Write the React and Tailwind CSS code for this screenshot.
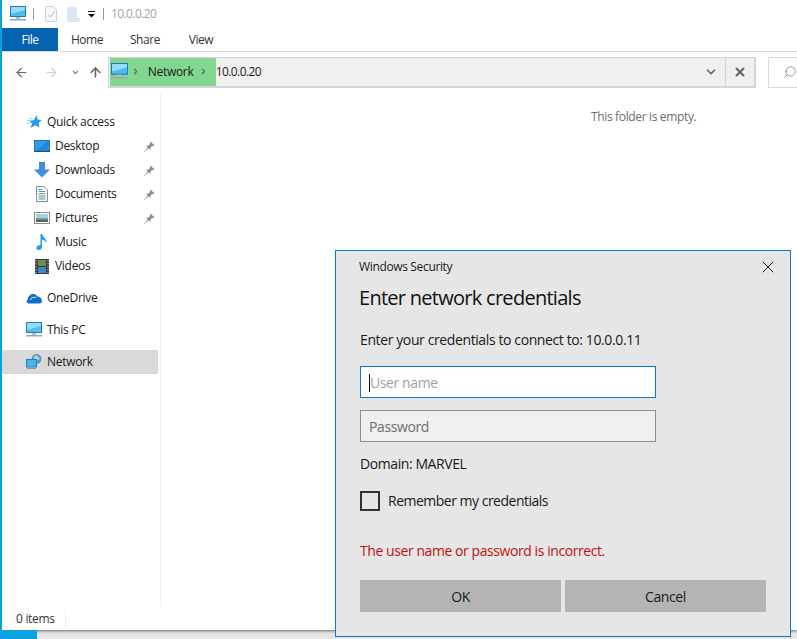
import { ArrowLeft, ArrowRight, ArrowUp, ChevronDown, ChevronRight, X, Search } from 'lucide-react'

const FONT = 'font-["Open_Sans","Noto_Sans",sans-serif]'

function MonitorIcon({ size = 16 }) {
  return (
    <svg width={size} height={size} viewBox="0 0 16 16">
      <rect x="0.5" y="0.5" width="15" height="10" fill="#4fbcf2" stroke="#2278b0" />
      <path d="M1 1 H15 V4 L1 8 Z" fill="#93dcfb" />
      <rect x="6" y="11" width="4" height="2" fill="#b5c0c7" />
      <rect x="0" y="13" width="16" height="1.5" fill="#9aa3c4" />
    </svg>
  )
}

function PinIcon() {
  return (
    <svg width="11" height="11" viewBox="0 0 11 11">
      <path d="M6.5 0.5 L10.5 4.5 L9.3 5 L7.8 4.9 L6.2 7.6 L6.3 9 L2 4.7 L3.4 4.8 L6.1 3.2 L6 1.7 Z" fill="#8c8c8c" />
      <path d="M3.8 7 L0.5 10.5 L4.2 7.4 Z" fill="#8c8c8c" stroke="#8c8c8c" strokeWidth="0.5" />
    </svg>
  )
}

function StarIcon() {
  return (
    <svg width="16" height="16" viewBox="0 0 16 16">
      <path d="M10.5 1 L11.6 5.4 L16 6 L12.6 8.8 L13.4 13.5 L9.4 11.2 L4.5 14 L6 9.6 L3.5 7.5 L8 6 Z" fill="#2a9be6" />
      <path d="M1 6.5 H6 M0 9 H4.5 M3 4.5 H7" stroke="#9ad4f7" strokeWidth="1" />
    </svg>
  )
}

function DesktopIcon() {
  return (
    <svg width="16" height="12" viewBox="0 0 16 12">
      <rect x="0.5" y="0.5" width="15" height="10.5" fill="#2c9cf0" stroke="#2a6ea8" />
      <path d="M3 10 L13 1.5 H14.5 V10 Z" fill="#1c86de" />
      <rect x="0" y="11" width="16" height="1" fill="#1c4f80" />
    </svg>
  )
}

function DownloadIcon() {
  return (
    <svg width="16" height="16" viewBox="0 0 16 16">
      <path d="M5 0 H11 V7.5 H16 L8 15.5 L0 7.5 H5 Z" fill="#3d8fdc" />
    </svg>
  )
}

function DocumentIcon() {
  return (
    <svg width="12" height="16" viewBox="0 0 12 16">
      <path d="M0.5 0.5 H8 L11.5 4 V15.5 H0.5 Z" fill="#fff" stroke="#8a8a8a" />
      <path d="M2.5 3.5 H6 M2.5 5.5 H9.5 M2.5 11 H9.5 M2.5 13 H9.5" stroke="#3f9ad9" />
      <path d="M2.5 7.5 H9.5 M2.5 9.2 H9.5" stroke="#8fa89a" />
    </svg>
  )
}

function PicturesIcon() {
  return (
    <svg width="16" height="12" viewBox="0 0 16 12">
      <rect x="0.5" y="0.5" width="15" height="11" fill="#fff" stroke="#8a8a8a" />
      <rect x="2" y="2" width="12" height="4" fill="#a8cde8" />
      <rect x="2" y="6" width="12" height="2" fill="#6f9a86" />
      <rect x="2" y="8" width="12" height="2" fill="#3f6b58" />
    </svg>
  )
}

function MusicIcon() {
  return (
    <svg width="12" height="16" viewBox="0 0 12 16">
      <path d="M4.5 0 H6 C6.5 3 11 4.5 10.5 9 C10 7 8 6 6 5.5 V13 C6 15 4 16 2.5 16 C1 16 0 15 0.5 13.5 C1 12 3 11 4.5 11.5 Z" fill="#1e9be8" />
    </svg>
  )
}

function VideosIcon() {
  return (
    <svg width="14" height="15" viewBox="0 0 14 15">
      <rect width="14" height="15" fill="#3a3a3a" />
      <rect x="3" y="1" width="8" height="6" fill="#6f8f4a" />
      <rect x="3" y="8" width="8" height="6" fill="#3d86c9" />
      <path d="M1 1 V14 M13 1 V14" stroke="#c9c9c9" strokeWidth="1" strokeDasharray="1.5 1.5" />
    </svg>
  )
}

function CloudIcon() {
  return (
    <svg width="16" height="11" viewBox="0 0 16 11">
      <path d="M3 10.5 C0.5 10.5 0 8 1.5 6.8 C2 3 5 1 7.5 1 C9.5 1 10.5 2 11.2 3.5 C13.5 3.5 15.5 5 16 7.5 C16 9.5 15 10.5 13.5 10.5 Z" fill="#0f6fc6" />
      <path d="M4.5 7 C5 4.5 8 3.5 10 5" stroke="#fff" strokeWidth="1" fill="none" />
    </svg>
  )
}

function NetworkIcon() {
  return (
    <svg width="16" height="16" viewBox="0 0 16 16">
      <circle cx="10.5" cy="5" r="5" fill="#5f93b8" />
      <path d="M7 3 L11 1 L14 5 L10 7 Z" fill="#a9cfe6" />
      <rect x="0.5" y="5.5" width="10" height="7.5" fill="#4db5ee" stroke="#2a7fb8" />
      <rect x="1" y="14" width="9" height="1" fill="#8b97a0" />
    </svg>
  )
}

function NavRow({ icon, label, pinned, active, top, indent }) {
  return (
    <div className={`flex items-center h-6 ${active ? 'bg-[#d9d9d9]' : ''} ${top ?? ''}`}>
      <div className={`flex items-center justify-center w-4 shrink-0 ${indent ? 'ml-8' : 'ml-6'}`}>{icon}</div>
      <span className="text-[12px] tracking-[-0.3px] text-[#1a1a1a] ml-[5px]">{label}</span>
      {pinned && (
        <span className="ml-auto mr-[3px] w-[11px] flex">
          <PinIcon />
        </span>
      )}
    </div>
  )
}

export default function App() {
  return (
    <div className={`${FONT} relative w-[797px] h-[639px] overflow-hidden bg-[#e6e6e6]`}>
      <div className="h-[630px] bg-white border-l-2 border-[#0a9fe0] flex flex-col shadow-[0_1px_3px_rgba(0,0,0,0.55)]">
        {/* title bar */}
        <div className="h-[28px] flex items-center shrink-0 pl-[8px]">
          <MonitorIcon />
          <span className="ml-[7px] w-px h-[12px] bg-[#9a9a9a]" />
          <svg className="ml-[11px]" width="12" height="16" viewBox="0 0 12 16">
            <path d="M0.5 0.5 H8 L11.5 4 V15.5 H0.5 Z" fill="#f4f7fb" stroke="#c3d2e6" />
            <path d="M3 8.5 L5.5 11 L9.5 5.5" stroke="#b0bcc9" fill="none" />
          </svg>
          <svg className="ml-[10px]" width="13" height="15" viewBox="0 0 13 15">
            <path d="M0 0 H10 V11 H13 V15 H0 Z" fill="#dce6f3" />
          </svg>
          <svg className="ml-[8px]" width="7" height="7" viewBox="0 0 7 7">
            <path d="M0 0.5 H7" stroke="#111" />
            <path d="M0 3 H7 L3.5 6.5 Z" fill="#111" />
          </svg>
          <span className="ml-[8px] w-px h-[12px] bg-[#9a9a9a]" />
          <span className="ml-[7px] text-[12px] tracking-[-0.6px] text-[#a6a6a6]">10.0.0.20</span>
        </div>

        {/* ribbon tabs */}
        <div className="h-[24px] flex items-stretch shrink-0 border-b border-[#dadada] text-[12px] tracking-[-0.45px] text-[#333]">
          <div className="w-[56px] pt-px bg-[#0563af] text-white flex items-center justify-center">File</div>
          <div className="w-[58px] pt-px flex items-center justify-center">Home</div>
          <div className="w-[58px] pt-px flex items-center justify-center">Share</div>
          <div className="w-[58px] pt-px flex items-center justify-center -ml-[2px]">View</div>
        </div>

        {/* address row */}
        <div className="h-[40px] flex items-center shrink-0">
          <ArrowLeft className="ml-[12px] text-[#666]" size={15} strokeWidth={2} />
          <ArrowRight className="ml-[15px] text-[#d0d0d0]" size={15} strokeWidth={2} />
          <ChevronDown className="ml-[12px] text-[#777]" size={9} strokeWidth={3} />
          <ArrowUp className="ml-[8px] text-[#666]" size={15} strokeWidth={2.5} />
          <div className="ml-[5px] w-[651px] h-[31px] flex items-stretch border-2 border-l border-t border-[#d5d5d5] bg-[#f0f0f0]">
            <div className="flex items-center w-[106px] bg-[#83d68f] ml-px">
              <span className="ml-px flex"><MonitorIcon size={17} /></span>
              <ChevronRight className="ml-[3px] text-[#666]" size={9} strokeWidth={3.5} />
              <span className="ml-[8px] text-[12px] tracking-[-0.3px] text-[#1a1a1a]">Network</span>
              <ChevronRight className="ml-[6px] text-[#666]" size={9} strokeWidth={3.5} />
            </div>
            <span className="self-center text-[12px] tracking-[-0.6px] text-[#1a1a1a]">10.0.0.20</span>
            <div className="ml-auto flex items-center pr-[7px]">
              <ChevronDown className="text-[#666]" size={14} strokeWidth={3} />
            </div>
            <div className="w-[29px] border-l border-[#d5d5d5] flex items-center justify-center">
              <X className="text-[#666]" size={14} strokeWidth={3.5} />
            </div>
          </div>
          <div className="ml-[12px] flex-1 h-[31px] border border-r-0 border-[#d9d9d9] flex items-center pl-[14px]">
            <Search className="-scale-x-100 text-[#888]" size={14} strokeWidth={1.5} />
          </div>
        </div>

        {/* main area */}
        <div className="flex flex-1 min-h-0">
          <div className="w-[159px] shrink-0 border-r border-[#f0f0f0] pt-[18px]">
            <div className="w-[156px]">
              <NavRow icon={<StarIcon />} label="Quick access" />
              <NavRow indent icon={<DesktopIcon />} label="Desktop" pinned />
              <NavRow indent icon={<DownloadIcon />} label="Downloads" pinned />
              <NavRow indent icon={<DocumentIcon />} label="Documents" pinned />
              <NavRow indent icon={<PicturesIcon />} label="Pictures" pinned />
              <NavRow indent icon={<MusicIcon />} label="Music" />
              <NavRow indent icon={<VideosIcon />} label="Videos" />
              <NavRow top="mt-2" icon={<CloudIcon />} label="OneDrive" />
              <NavRow top="mt-2" icon={<MonitorIcon />} label="This PC" />
              <NavRow top="mt-2" active icon={<NetworkIcon />} label="Network" />
            </div>
          </div>
          <div className="flex-1 pt-[16px] pl-[430px] whitespace-nowrap text-[12px] tracking-[-0.35px] text-[#6d6d6d]">
            This folder is empty.
          </div>
        </div>

        {/* status bar */}
        <div className="h-[24px] shrink-0 flex items-center pl-[14px] pt-[2px] text-[12px] tracking-[-0.3px] text-[#333]">
          <span className="pr-[10px] border-r border-[#eeeeee]">0 items</span>
        </div>
      </div>

      {/* desktop peeking under the window */}
      <div className="absolute left-0 bottom-0 w-[37px] h-[9px] bg-[#0aa2e2]" />

      {/* credentials dialog */}
      <div className="absolute left-[335px] top-[250px] w-[456px] h-[387px] bg-[#e6e6e6] border border-[#0f78c8] pl-[23px] pr-[24px]">
        <div className="flex items-center justify-between h-[32px]">
          <span className="text-[12px] tracking-[-0.35px] text-[#1a1a1a]">Windows Security</span>
          <X className="text-[#222] -mr-[12px]" size={20} strokeWidth={1.2} />
        </div>
        <h1 className="mt-[1px] text-[20px] leading-[28px] tracking-[-0.72px] font-normal text-[#111]">Enter network credentials</h1>
        <p className="ml-px mt-[18px] text-[14px] leading-[20px] tracking-[-0.39px] text-[#1a1a1a]">
          Enter your credentials to connect to: 10.0.0.11
        </p>
        <div className="ml-px w-[296px] h-[32px] mt-[16px] pt-px bg-white border border-[#0f78c8] flex items-center pl-[8px] text-[14px] tracking-[-0.4px] text-[#a0a0a0]">
          <span className="w-px h-[18px] bg-[#111]" />
          <span>User name</span>
        </div>
        <div className="ml-px w-[296px] h-[32px] mt-[12px] pt-px bg-[#f0f0f0] border border-[#8e8e8e] flex items-center pl-[8px] text-[14px] tracking-[-0.4px] text-[#6e6e6e]">
          Password
        </div>
        <p className="ml-px mt-[12px] text-[14px] leading-[20px] tracking-[-0.42px] text-[#1a1a1a]">Domain: MARVEL</p>
        <div className="ml-px mt-[17px] flex items-center">
          <span className="w-5 h-5 border-2 border-[#333]" />
          <span className="ml-2 text-[14px] leading-[20px] tracking-[-0.5px] text-[#1a1a1a]">Remember my credentials</span>
        </div>
        <p className="ml-px mt-[30px] text-[14px] leading-[20px] tracking-[-0.43px] text-[#c80f0f]">
          The user name or password is incorrect.
        </p>
        <div className="ml-px mt-[19px] flex gap-1 w-[406px]">
          <button className="flex-1 h-[32px] bg-[#b4b4b4] text-[14px] tracking-[-0.4px] text-[#1a1a1a]">OK</button>
          <button className="flex-1 h-[32px] bg-[#b4b4b4] text-[14px] tracking-[-0.4px] text-[#1a1a1a]">Cancel</button>
        </div>
      </div>
    </div>
  )
}
